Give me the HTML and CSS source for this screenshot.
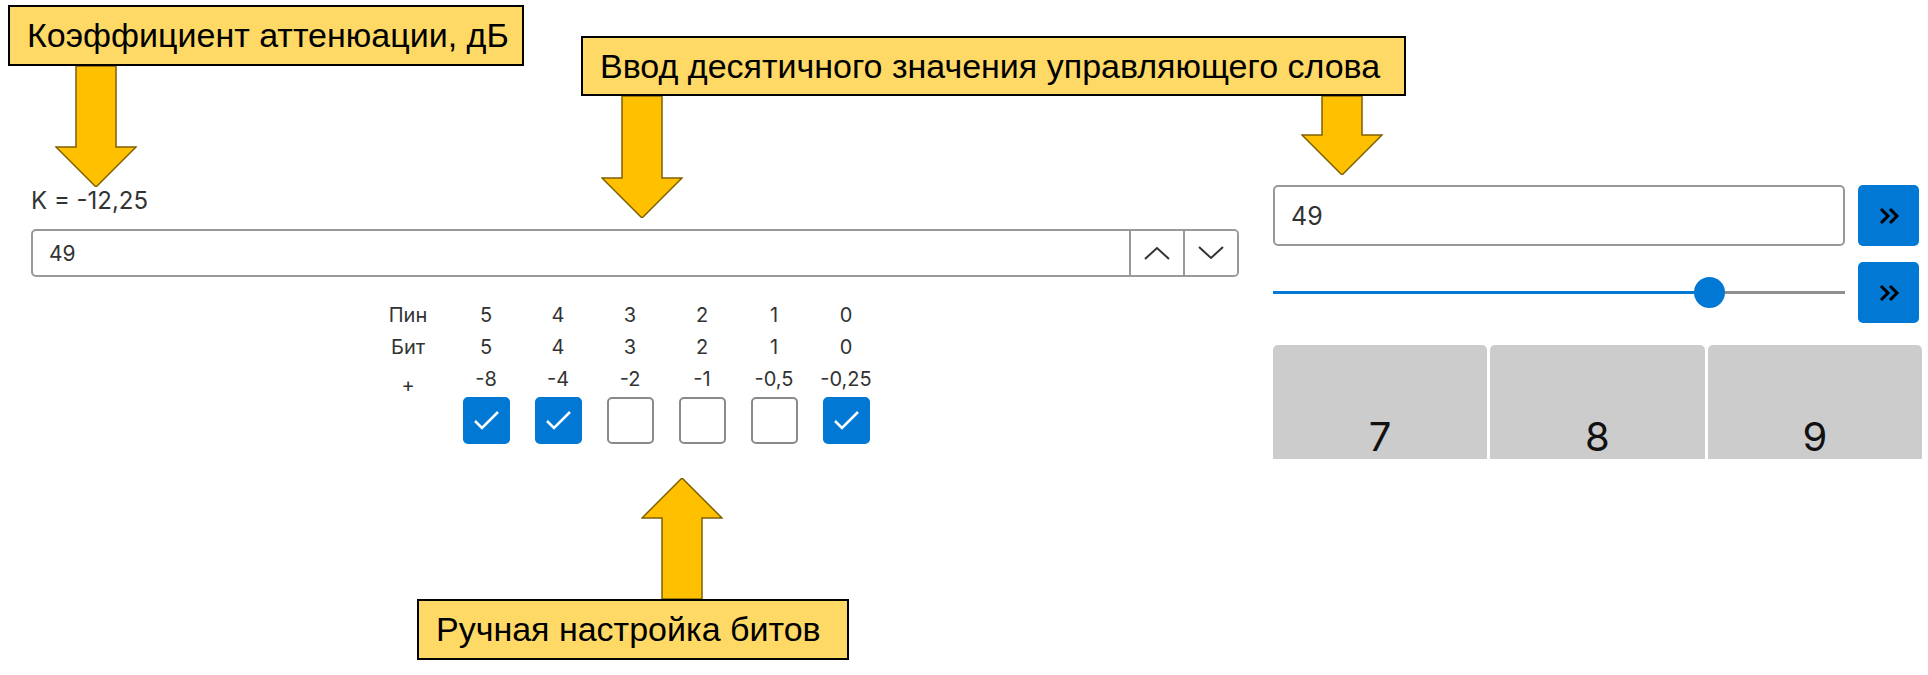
FILE: index.html
```html
<!DOCTYPE html>
<html lang="ru">
<head>
  <meta charset="UTF-8" />
  <meta name="viewport" content="width=device-width, initial-scale=1" />
  <title>Аттенюатор</title>
  <link rel="stylesheet" href="styles.css">
</head>
<body>
  <main class="workspace">
    <section class="bits-panel">
      <div class="k-label">K = -12,25</div>

      <div class="spin-box">
        <input class="spin-value" type="text" value="49" />
        <button class="spin-btn" type="button" aria-label="Увеличить">
          <svg width="26" height="14" viewBox="0 0 26 14"><polyline points="1,13 13,2 25,13" /></svg>
        </button>
        <button class="spin-btn" type="button" aria-label="Уменьшить">
          <svg width="26" height="14" viewBox="0 0 26 14"><polyline points="1,1 13,12 25,1" /></svg>
        </button>
      </div>

      <div class="bit-grid">
        <span class="row-name">Пин</span>
        <span>5</span><span>4</span><span>3</span><span>2</span><span>1</span><span>0</span>

        <span class="row-name">Бит</span>
        <span>5</span><span>4</span><span>3</span><span>2</span><span>1</span><span>0</span>

        <span class="row-name plus">+</span>
        <span>-8</span><span>-4</span><span>-2</span><span>-1</span><span>-0,5</span><span>-0,25</span>

        <span></span>
        <label class="bit-box checked"><svg viewBox="0 0 47 47"><polyline points="12,24 19,31 35,15" /></svg></label>
        <label class="bit-box checked"><svg viewBox="0 0 47 47"><polyline points="12,24 19,31 35,15" /></svg></label>
        <label class="bit-box"></label>
        <label class="bit-box"></label>
        <label class="bit-box"></label>
        <label class="bit-box checked"><svg viewBox="0 0 47 47"><polyline points="12,24 19,31 35,15" /></svg></label>
      </div>
    </section>

    <section class="control-panel">
      <div class="send-row">
        <input class="word-input" type="text" value="49" />
        <button class="send-btn" type="button" aria-label="Отправить">
          <svg width="22" height="18" viewBox="0 0 22 18"><polyline points="3,2 10,9 3,16" /><polyline points="12,2 19,9 12,16" /></svg>
        </button>
      </div>

      <div class="send-row">
        <input class="word-slider" type="range" min="0" max="63" value="49" style="--fill: 76.4%" />
        <button class="send-btn" type="button" aria-label="Отправить">
          <svg width="22" height="18" viewBox="0 0 22 18"><polyline points="3,2 10,9 3,16" /><polyline points="12,2 19,9 12,16" /></svg>
        </button>
      </div>

      <div class="keypad">
        <button class="key" type="button">7</button>
        <button class="key" type="button">8</button>
        <button class="key" type="button">9</button>
      </div>
    </section>
  </main>

  <!-- annotation callouts and pointers -->
  <div class="callout callout-k">Коэффициент аттенюации, дБ</div>
  <div class="callout callout-word">Ввод десятичного значения управляющего слова</div>
  <div class="callout callout-bits">Ручная настройка битов</div>

  <svg class="pointer pointer-k" width="82" height="121" viewBox="0 0 82 121">
    <polygon points="21,0 61,0 61,81 81,81 41,121 1,81 21,81" />
  </svg>
  <svg class="pointer pointer-spin" width="82" height="122" viewBox="0 0 82 122">
    <polygon points="21,0 61,0 61,82 81,82 41,122 1,82 21,82" />
  </svg>
  <svg class="pointer pointer-word" width="82" height="79" viewBox="0 0 82 79">
    <polygon points="21,0 61,0 61,39 81,39 41,79 1,39 21,39" />
  </svg>
  <svg class="pointer pointer-bits" width="82" height="121" viewBox="0 0 82 121">
    <polygon points="41,0 81,40 61,40 61,121 21,121 21,40 1,40" />
  </svg>
</body>
</html>
```

FILE: styles.css
```css
body {
  margin: 0;
  background: #fff;
  font-family: Inter, "Noto Sans", sans-serif;
  color: #333;
  overflow: hidden;
}

.workspace {
  display: flex;
  gap: 34px;
  padding: 185px 0 0 31px;
}

/* left side: value, spinner, bit table */

.bits-panel {
  width: 1208px;
}

.k-label {
  margin-top: 1px;
  font-size: 24px;
  line-height: 30px;
  margin-bottom: 13px;
}

.spin-box {
  display: flex;
  height: 48px;
  box-sizing: border-box;
  border: 2px solid #999;
  border-radius: 5px;
  overflow: hidden;
}

.spin-value {
  flex: 1;
  border: none;
  outline: none;
  padding: 0 0 0 16px;
  font-family: inherit;
  font-size: 21px;
  color: #333;
  background: transparent;
}

.spin-btn {
  width: 54px;
  border: none;
  border-left: 2px solid #999;
  background: #fff;
  display: flex;
  align-items: center;
  justify-content: center;
  padding: 0;
}

.spin-btn svg polyline {
  fill: none;
  stroke: #333;
  stroke-width: 2;
}

.bit-grid {
  display: grid;
  grid-template-columns: 84px repeat(6, 72px);
  grid-template-rows: 32px 32px 32px auto;
  margin: 22px 0 0 335px;
  font-size: 20px;
  text-align: center;
}

.bit-grid span {
  line-height: 32px;
}

.bit-grid .plus {
  padding-top: 12px;
  line-height: 20px;
}

.bit-box {
  justify-self: center;
  width: 47px;
  height: 47px;
  margin-top: 2px;
  box-sizing: border-box;
  border: 2px solid #8a8a8a;
  border-radius: 5px;
  background: #fff;
}

.bit-box.checked {
  border-color: #0078d4;
  background: #0078d4;
}

.bit-box svg {
  display: block;
  width: 47px;
  height: 47px;
  margin: -2px;
}

.bit-box svg polyline {
  fill: none;
  stroke: #fff;
  stroke-width: 2.5;
}

/* right side: word input, slider, keypad */

.control-panel {
  width: 646px;
  display: flex;
  flex-direction: column;
  gap: 16px;
}

.send-row {
  display: flex;
  align-items: center;
  gap: 13px;
  height: 61px;
}

.word-input {
  flex: 1;
  height: 61px;
  box-sizing: border-box;
  border: 2px solid #999;
  border-radius: 5px;
  padding: 0 0 0 16px;
  font-family: inherit;
  font-size: 25px;
  color: #333;
  outline: none;
}

.send-btn {
  width: 61px;
  height: 61px;
  border: none;
  border-radius: 5px;
  background: #0078d4;
  display: flex;
  align-items: center;
  justify-content: center;
  padding: 0;
}

.send-btn svg polyline {
  fill: none;
  stroke: #000;
  stroke-width: 3;
}

.word-slider {
  -webkit-appearance: none;
  appearance: none;
  flex: 1;
  height: 31px;
  margin: 0;
  background: transparent;
}

.word-slider::-webkit-slider-runnable-track {
  height: 3px;
  background: linear-gradient(to right, #0078d4 var(--fill), #8f8f8f var(--fill));
}

.word-slider::-webkit-slider-thumb {
  -webkit-appearance: none;
  width: 31px;
  height: 31px;
  margin-top: -14px;
  border: none;
  border-radius: 50%;
  background: #0078d4;
}

/* only the top row of the keypad is in view */
.keypad {
  display: flex;
  gap: 3px;
  height: 114px;
  margin: 6px -3px 0 0;
}

.key {
  flex: 1;
  height: 114px;
  border: none;
  border-radius: 5px 5px 0 0;
  background: #ccc;
  font-family: inherit;
  font-size: 40px;
  line-height: 40px;
  color: #111;
  display: flex;
  align-items: flex-end;
  justify-content: center;
  padding: 0 0 2px;
}

/* annotations */

.callout {
  position: absolute;
  z-index: 2;
  box-sizing: border-box;
  display: flex;
  align-items: center;
  padding-left: 17px;
  background: #ffd966;
  border: 2px solid #000;
  font-family: "Liberation Sans", Arial, sans-serif;
  font-size: 34px;
  color: #000;
  white-space: nowrap;
}

.callout-k {
  left: 8px;
  top: 5px;
  width: 516px;
  height: 61px;
}

.callout-word {
  left: 581px;
  top: 36px;
  width: 825px;
  height: 60px;
}

.callout-bits {
  left: 417px;
  top: 599px;
  width: 432px;
  height: 61px;
}

.pointer {
  position: absolute;
  z-index: 1;
}

.pointer polygon {
  fill: #ffc000;
  stroke: #7f6000;
  stroke-width: 1.5;
}

.pointer-k {
  left: 55px;
  top: 66px;
}

.pointer-spin {
  left: 601px;
  top: 96px;
}

.pointer-word {
  left: 1301px;
  top: 96px;
}

.pointer-bits {
  left: 641px;
  top: 478px;
}
```
